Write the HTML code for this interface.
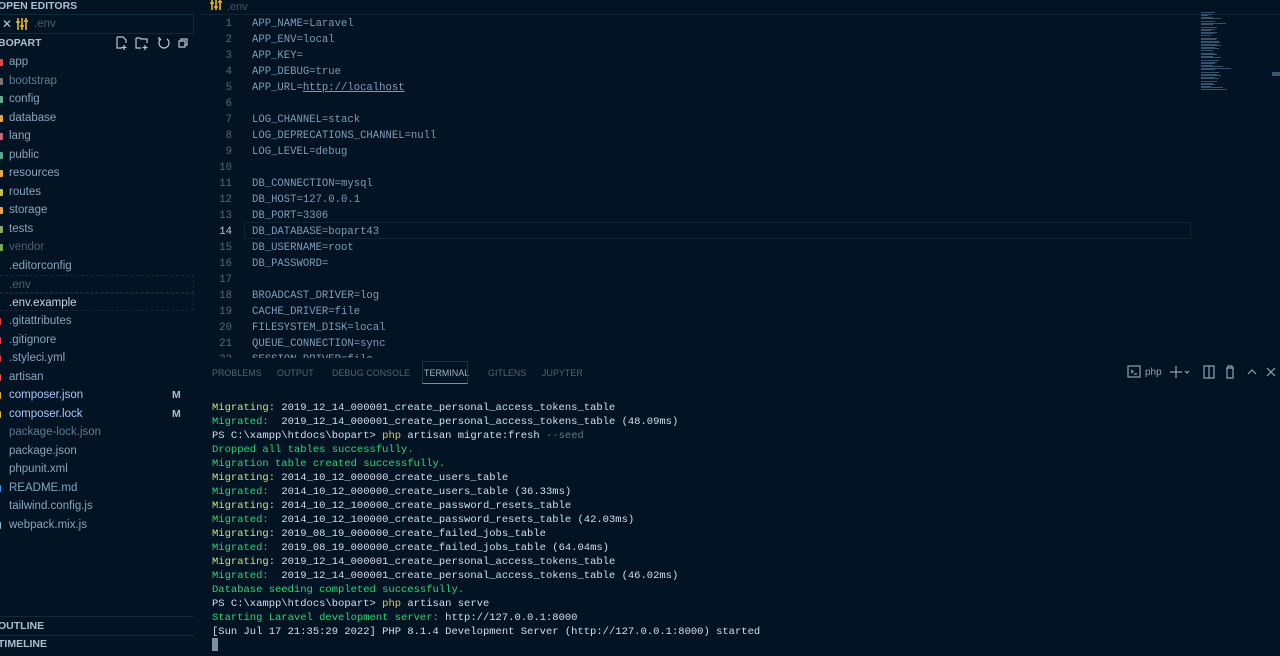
<!DOCTYPE html>
<html><head><meta charset="utf-8"><style>
*{margin:0;padding:0;box-sizing:border-box}
body{width:1280px;height:656px;background:#021424;overflow:hidden;position:relative;font-family:"Liberation Sans",sans-serif}
.side{position:absolute;left:0;top:0;width:195px;height:656px;background:#021424}
.hdr{position:absolute;left:-2px;font-size:10.5px;font-weight:bold;color:#a9bfd2;letter-spacing:0}
.row{position:absolute;left:0;height:18px;font-size:11.5px;color:#8aa4bd;line-height:18px;width:194px}
.row .ic{position:absolute;left:-3px;top:6px;width:6px;height:7px;border-radius:1px}
.row span{position:absolute;left:9px}
.mono{font-family:"Liberation Mono",monospace}
.ed{position:absolute;left:200px;top:0;width:1080px;height:360px}
.ln{position:absolute;left:0;width:32px;text-align:right;font-size:10.6px;color:#4d6a82}
.code{position:absolute;left:52px;font-size:10.6px;color:#7f9bb8;white-space:pre}
.tabs{position:absolute;top:368px;font-size:8.8px;color:#4d6478;letter-spacing:0.1px}
.term{position:absolute;left:212px;font-size:10.5px;white-space:pre;color:#d6deeb}
.y{color:#c5e478}.g{color:#22da6e}.p{color:#e8c05a}.gr{color:#637777}
</style></head><body>
<div class="side">
 <div class="hdr" style="top:0">OPEN EDITORS</div>
 <div style="position:absolute;left:0;top:14px;width:194px;height:20px;border:1px solid #0e2a3d;border-left:none"></div>
 <div style="position:absolute;left:2px;top:17px;color:#b8c6d3;font-size:12px">✕</div>
 <svg style="position:absolute;left:16px;top:17px" width="12" height="14" stroke="#e8b728" stroke-width="1.6" fill="none"><path d="M2 1v12M6 1v12M10 1v12M0 5h4M4 9h4M8 4h4"/></svg>
 <div style="position:absolute;left:34px;top:18px;color:#4a6072;font-size:11.5px">.env</div>
 <div class="hdr" style="top:37px">BOPART</div>
 <svg style="position:absolute;left:115px;top:35px" width="75" height="16" fill="none" stroke="#b8c6d3" stroke-width="1.2">
  <path d="M2 2h6l3 3v3M2 2v11h5M9 10v5M6.5 12.5h5"/>
  <path d="M21 3h4l1 1h6v4M21 3v10h5M30 10v5M27.5 12.5h5"/>
  <path d="M52 4a5 5 0 1 1-6 0M46 4h-2v-2"/>
  <path d="M64 6h6v6h-6zM66 6v-2h6v6h-2"/>
 </svg>
 <div class="row" style="top:53px"><i class="ic" style="background:#e44"></i><span>app</span></div>
 <div class="row" style="top:72px"><i class="ic" style="background:#777"></i><span style="color:#5f7b92">bootstrap</span></div>
 <div class="row" style="top:90px"><i class="ic" style="background:#6a9"></i><span>config</span></div>
 <div class="row" style="top:109px"><i class="ic" style="background:#e9a73a"></i><span>database</span></div>
 <div class="row" style="top:127px"><i class="ic" style="background:#c67"></i><span>lang</span></div>
 <div class="row" style="top:146px"><i class="ic" style="background:#5a8"></i><span>public</span></div>
 <div class="row" style="top:164px"><i class="ic" style="background:#e9a73a"></i><span>resources</span></div>
 <div class="row" style="top:183px"><i class="ic" style="background:#cb4"></i><span>routes</span></div>
 <div class="row" style="top:201px"><i class="ic" style="background:#e9a73a"></i><span>storage</span></div>
 <div class="row" style="top:220px"><i class="ic" style="background:#8a6"></i><span>tests</span></div>
 <div class="row" style="top:238px"><i class="ic" style="background:#7a5"></i><span style="color:#4a6072">vendor</span></div>
 <div class="row" style="top:257px"><i class="ic" style="background:#ddd;width:3px"></i><span>.editorconfig</span></div>
 <div class="row" style="top:275px;border:1px dashed #13293a;border-left:none"><i class="ic" style="background:#e8b728;width:3px"></i><span style="color:#4a6072">.env</span></div>
 <div class="row" style="top:293px;border:1px dashed #13293a;border-left:none"><i class="ic" style="background:#e8b728;width:3px"></i><span style="color:#c8d4e0">.env.example</span></div>
 <div class="row" style="top:312px"><i class="ic" style="background:#e44;width:4px"></i><span>.gitattributes</span></div>
 <div class="row" style="top:331px"><i class="ic" style="background:#e44;width:4px"></i><span>.gitignore</span></div>
 <div class="row" style="top:349px"><i class="ic" style="background:#e33;width:4px"></i><span>.styleci.yml</span></div>
 <div class="row" style="top:368px"><i class="ic" style="background:#e55;width:4px"></i><span>artisan</span></div>
 <div class="row" style="top:386px"><i class="ic" style="background:#e8b728;width:4px"></i><span style="color:#a9c6ff">composer.json</span><b style="position:absolute;left:172px;color:#a9bfd2;font-size:10.5px">M</b></div>
 <div class="row" style="top:405px"><i class="ic" style="background:#e8b728;width:4px"></i><span style="color:#a9c6ff">composer.lock</span><b style="position:absolute;left:172px;color:#a9bfd2;font-size:10.5px">M</b></div>
 <div class="row" style="top:423px"><i class="ic" style="background:#8a6;width:3px"></i><span style="color:#5f7b92">package-lock.json</span></div>
 <div class="row" style="top:442px"><i class="ic" style="background:#8a6;width:3px"></i><span>package.json</span></div>
 <div class="row" style="top:460px"><i class="ic" style="background:#87c;width:3px"></i><span>phpunit.xml</span></div>
 <div class="row" style="top:479px"><i class="ic" style="background:#39f;width:4px"></i><span>README.md</span></div>
 <div class="row" style="top:497px"><i class="ic" style="background:#3aa;width:3px"></i><span>tailwind.config.js</span></div>
 <div class="row" style="top:516px"><i class="ic" style="background:#8bd;width:4px"></i><span>webpack.mix.js</span></div>
 <div style="position:absolute;left:0;top:616px;width:194px;border-top:1px solid #13293a"></div>
 <div class="hdr" style="top:620px">OUTLINE</div>
 <div style="position:absolute;left:0;top:635px;width:194px;border-top:1px solid #13293a"></div>
 <div class="hdr" style="top:638px">TIMELINE</div>
</div>
<svg style="position:absolute;left:210px;top:0" width="12" height="11" stroke="#e8b728" stroke-width="1.6" fill="none"><path d="M2 0v10M6 0v10M10 0v10M0 3h4M4 7h4M8 2h4"/></svg>
<div style="position:absolute;left:227px;top:1px;color:#3f5569;font-size:11px">.env</div>
<div style="position:absolute;left:200px;top:14px;width:1080px;border-top:1px solid #0e2435"></div>
<div class="ed mono">
<div style="position:absolute;left:44px;top:222px;width:947px;height:17px;border:1px solid #0e2435"></div>
<div id="ed"></div>
</div>
<div id="mm" style="position:absolute;left:1197px;top:12px;width:50px;height:80px"></div>
<div style="position:absolute;left:1272px;top:72px;width:8px;height:4px;background:#3a5670"></div>
<div class="tabs" style="left:212px">PROBLEMS</div>
<div class="tabs" style="left:277px">OUTPUT</div>
<div class="tabs" style="left:332px">DEBUG CONSOLE</div>
<div class="tabs" style="left:424px;color:#9fb3c6">TERMINAL</div>
<div style="position:absolute;left:422px;top:361px;width:46px;height:23px;border:1px solid #1b3346;border-bottom:1px solid #7a90a4"></div>
<div class="tabs" style="left:488px">GITLENS</div>
<div class="tabs" style="left:542px">JUPYTER</div>
<svg style="position:absolute;left:1126px;top:364px" width="150" height="16" fill="none" stroke="#8ea2b4" stroke-width="1.2">
 <rect x="2" y="2" width="12" height="11"/><path d="M5 6l2 1.5-2 1.5M8 10h3"/>
 <path d="M50 2v12M44 8h12M59 7l2 2 2-2"/>
 <rect x="78" y="2" width="10" height="12"/><path d="M83 2v12"/>
 <path d="M100 4h8M102 4v-2h4v2M101 4v10h6v-10"/>
 <path d="M122 10l4-4 4 4M141 4l8 8M149 4l-8 8"/>
</svg>
<div style="position:absolute;left:1145px;top:367px;font-size:10px;color:#8ea2b4">php</div>
<div class="mono" id="term"></div>
<div style="position:absolute;left:212px;top:638px;width:6px;height:13px;background:#7a90a4"></div>
<script>
var L=["APP_NAME=Laravel","APP_ENV=local","APP_KEY=","APP_DEBUG=true","APP_URL=<u style='text-decoration-color:#7f9bb8'>http://localhost</u>","","LOG_CHANNEL=stack","LOG_DEPRECATIONS_CHANNEL=null","LOG_LEVEL=debug","","DB_CONNECTION=mysql","DB_HOST=127.0.0.1","DB_PORT=3306","DB_DATABASE=bopart43","DB_USERNAME=root","DB_PASSWORD=","","BROADCAST_DRIVER=log","CACHE_DRIVER=file","FILESYSTEM_DISK=local","QUEUE_CONNECTION=sync","SESSION_DRIVER=file"];
var h="",m="";L.forEach(function(t,i){var y=18+i*16;h+="<div class='ln' style='top:"+y+"px;"+(i==13?"color:#b9c8d6":"")+"'>"+(i+1)+"</div><div class='code' style='top:"+y+"px'>"+t+"</div>";});
document.getElementById("ed").innerHTML=h+"<div style='position:absolute;left:0;top:358px;width:1080px;height:10px;background:#021424'></div>";
var W=[14,11,7,12,20,0,14,25,12,0,16,14,10,16,13,10,0,16,15,18,19,16,20,14,18,12,0,14,16,12,20,0,18,16,14,12,22,30,14,0,18,16,20,14,18,0,16,12,14,10,22,26];
W.forEach(function(w,i){if(w)m+="<div style='position:absolute;left:4px;top:"+(i*1.5)+"px;width:"+w+"px;height:1px;background:#36516b'></div>";});
document.getElementById("mm").innerHTML=m;
var T=["<span class=y>Migrating:</span> 2019_12_14_000001_create_personal_access_tokens_table","<span class=g>Migrated:</span>  2019_12_14_000001_create_personal_access_tokens_table (48.09ms)","PS C:\\xampp\\htdocs\\bopart&gt; <span class=p>php</span> artisan migrate:fresh <span class=gr>--seed</span>","<span class=g>Dropped all tables successfully.</span>","<span class=g>Migration table created successfully.</span>","<span class=y>Migrating:</span> 2014_10_12_000000_create_users_table","<span class=g>Migrated:</span>  2014_10_12_000000_create_users_table (36.33ms)","<span class=y>Migrating:</span> 2014_10_12_100000_create_password_resets_table","<span class=g>Migrated:</span>  2014_10_12_100000_create_password_resets_table (42.03ms)","<span class=y>Migrating:</span> 2019_08_19_000000_create_failed_jobs_table","<span class=g>Migrated:</span>  2019_08_19_000000_create_failed_jobs_table (64.04ms)","<span class=y>Migrating:</span> 2019_12_14_000001_create_personal_access_tokens_table","<span class=g>Migrated:</span>  2019_12_14_000001_create_personal_access_tokens_table (46.02ms)","<span class=g>Database seeding completed successfully.</span>","PS C:\\xampp\\htdocs\\bopart&gt; <span class=p>php</span> artisan serve","<span class=g>Starting Laravel development server:</span> http://127.0.0.1:8000","[Sun Jul 17 21:35:29 2022] PHP 8.1.4 Development Server (http://127.0.0.1:8000) started"];
h="";T.forEach(function(t,i){h+="<div class='term' style='top:"+(402+i*14)+"px'>"+t+"</div>";});
document.getElementById("term").innerHTML=h;
</script>
</body></html>
